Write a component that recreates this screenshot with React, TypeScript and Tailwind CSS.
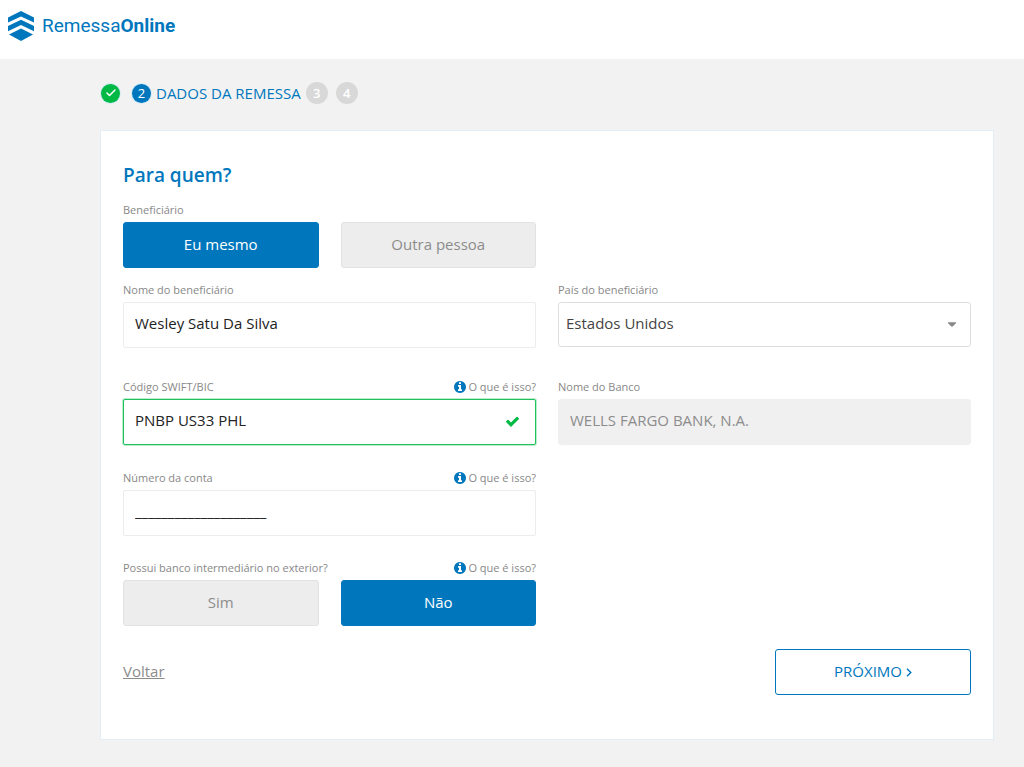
import { useState, type ReactNode } from "react";
import { FaCaretDown } from "react-icons/fa";
import { Check } from "lucide-react";
import { clsx } from "clsx";

const fieldClass =
  "block h-[46px] w-full rounded-xs border border-[#ececec] bg-white px-[11px] pb-[3px] text-[15px] text-[#222] outline-none";

function Logo() {
  return (
    <a href="#" className="flex items-center gap-2 text-[#0077bd]" aria-label="RemessaOnline">
      <svg className="h-[30px] w-[26px]" viewBox="0 0 26 30" fill="currentColor" aria-hidden="true">
        <path d="M13 0 26 6.6V11.6L13 5.4 0 11.6V6.6Z" />
        <path d="M13 8.8 26 15V20.2L13 14 0 20.2V15Z" />
        <path d="M13 17.6 25 23.6 13 30 1 23.6Z" />
      </svg>
      <span className="font-[Roboto,sans-serif] text-[19px] leading-6">
        Remessa<b className="font-bold">Online</b>
      </span>
    </a>
  );
}

function InfoIcon() {
  return (
    <svg className="size-3 text-[#0077bd]" viewBox="128 128 1536 1536" fill="currentColor" aria-hidden="true">
      <path d="M1152 1376v-160q0-14-9-23t-23-9h-96v-512q0-14-9-23t-23-9h-320q-14 0-23 9t-9 23v160q0 14 9 23t23 9h96v320h-96q-14 0-23 9t-9 23v160q0 14 9 23t23 9h448q14 0 23-9t9-23zm-128-896v-160q0-14-9-23t-23-9h-192q-14 0-23 9t-9 23v160q0 14 9 23t23 9h192q14 0 23-9t9-23zm640 416q0 209-103 385.5t-279.5 279.5-385.5 103-385.5-103-279.5-279.5-103-385.5 103-385.5 279.5-279.5 385.5-103 385.5 103 279.5 279.5 103 385.5z" />
    </svg>
  );
}

function ValidIcon() {
  return (
    <svg
      className="pointer-events-none absolute top-[15px] right-4 size-[15px] text-[#00b945]"
      viewBox="0 0 1792 1792"
      fill="currentColor"
      aria-hidden="true"
    >
      <path d="M1671 566q0 40-28 68l-724 724-136 136q-28 28-68 28t-68-28l-136-136-362-362q-28-28-28-68t28-68l136-136q28-28 68-28t68 28l294 295 656-657q28-28 68-28t68 28l136 136q28 28 28 68z" />
    </svg>
  );
}

function Stepper() {
  return (
    <ol className="flex items-center text-[15px] text-white">
      <li className="mr-3 flex size-[19px] items-center justify-center rounded-full bg-[#00b945] ring-1 ring-[#d5ebf5]">
        <Check className="size-3" strokeWidth={3} aria-label="Concluído" />
      </li>
      <li className="mr-[5px] flex items-center gap-[5px]" aria-current="step">
        <span className="flex size-[19px] items-center justify-center rounded-full bg-[#0077bd] text-[13px] ring-1 ring-[#d5ebf5]">
          2
        </span>
        <span className="text-[#0077bd]">DADOS DA REMESSA</span>
      </li>
      {[3, 4].map((step) => (
        <li
          key={step}
          className="mr-2 flex size-[22px] items-center justify-center rounded-full bg-[#d8d8d8] text-[13px] font-semibold"
        >
          {step}
        </li>
      ))}
    </ol>
  );
}

function HelpLink() {
  return (
    <a href="#" className="flex items-center gap-0.5">
      <InfoIcon />
      O que é isso?
    </a>
  );
}

type FieldProps = {
  label: string;
  htmlFor: string;
  help?: boolean;
  children: ReactNode;
};

function Field({ label, htmlFor, help, children }: FieldProps) {
  return (
    <div>
      <div className="mb-1 flex justify-between text-[11px] leading-4 text-[#888]">
        <label htmlFor={htmlFor}>{label}</label>
        {help && <HelpLink />}
      </div>
      {children}
    </div>
  );
}

type ChoiceProps = {
  id: string;
  label: string;
  options: [string, string];
  initial: string;
  help?: boolean;
};

function Choice({ id, label, options, initial, help }: ChoiceProps) {
  const [value, setValue] = useState(initial);

  return (
    <div role="group" aria-labelledby={id}>
      <div className="mb-1 flex justify-between text-[11px] leading-4 text-[#888]">
        <span id={id}>{label}</span>
        {help && <HelpLink />}
      </div>
      <div className="grid grid-cols-2 gap-[22px]">
        {options.map((option) => (
          <button
            key={option}
            type="button"
            aria-pressed={option === value}
            onClick={() => setValue(option)}
            className={clsx(
              "h-[46px] rounded-[3px] border text-[15px]",
              option === value
                ? "border-[#0077bd] bg-[#0077bd] text-white"
                : "border-[#e2e2e2] bg-[#ededed] text-[#8c8c8c]",
            )}
          >
            {option}
          </button>
        ))}
      </div>
    </div>
  );
}

export default function App() {
  return (
    <div className="min-h-screen bg-[#f2f2f2] font-['Open_Sans',sans-serif]">
      <header className="flex h-[59px] bg-white px-2 pt-[11px]">
        <div>
          <Logo />
        </div>
      </header>

      <main className="mr-[30px] ml-[100px] pt-[23px] pb-[27px]">
        <div className="pl-px">
          <Stepper />
        </div>

        <form
          onSubmit={(e) => e.preventDefault()}
          className="mt-[25px] border border-[#e1eef5] bg-white px-[22px] pt-[30px] pb-11"
        >
          <h1 className="mb-[13px] text-[19px] leading-7 font-semibold text-[#0077bd]">Para quem?</h1>

          <div className="grid grid-cols-2 gap-x-[22px]">
            <Choice
              id="beneficiario"
              label="Beneficiário"
              options={["Eu mesmo", "Outra pessoa"]}
              initial="Eu mesmo"
            />
          </div>

          <div className="mt-[14px] grid grid-cols-2 gap-x-[22px]">
            <Field label="Nome do beneficiário" htmlFor="nome">
              <input id="nome" className={fieldClass} defaultValue="Wesley Satu Da Silva" />
            </Field>
            <Field label="País do beneficiário" htmlFor="pais">
              <div className="relative">
                <select
                  id="pais"
                  className="block h-[45px] w-full appearance-none rounded-[3px] border border-[#dedede] bg-white px-[7px] pb-px text-[15px] text-[#444] outline-none"
                >
                  <option>Estados Unidos</option>
                </select>
                <FaCaretDown
                  className="pointer-events-none absolute top-[15px] right-3 size-[14px] text-[#888]"
                  aria-hidden="true"
                />
              </div>
            </Field>
          </div>

          <div className="mt-[31px] grid grid-cols-2 gap-x-[22px] gap-y-[25px]">
            <Field label="Código SWIFT/BIC" htmlFor="swift" help>
              <div className="relative">
                <input
                  id="swift"
                  className="block h-[46px] w-full rounded-xs border border-[#1fc15c] bg-white px-[11px] pb-[3px] text-[15px] text-[#222] ring-1 ring-[#1fc15c]/30 outline-none"
                  defaultValue="PNBP US33 PHL"
                />
                <ValidIcon />
              </div>
            </Field>
            <Field label="Nome do Banco" htmlFor="banco">
              <input
                id="banco"
                readOnly
                className="block h-[46px] w-full rounded-[3px] border border-[#f0f0f0] bg-[#f0f0f0] px-[11px] pb-[3px] text-[15px] text-[#8c8c8c] outline-none"
                defaultValue="WELLS FARGO BANK, N.A."
              />
            </Field>
            <Field label="Número da conta" htmlFor="conta" help>
              <input id="conta" className={fieldClass} defaultValue="____________________" />
            </Field>
          </div>

          <div className="mt-6 grid grid-cols-2 gap-x-[22px]">
            <Choice
              id="intermediario"
              label="Possui banco intermediário no exterior?"
              options={["Sim", "Não"]}
              initial="Não"
              help
            />
          </div>

          <div className="mt-[23px] flex items-center justify-between text-[15px]">
            <a href="#" className="text-[#8c8c8c] underline">
              Voltar
            </a>
            <button
              type="submit"
              className="flex h-[46px] w-[196px] items-center justify-center gap-1 rounded-[3px] border border-[#0077bd] bg-white text-[#0077bd]"
            >
              PRÓXIMO
              <svg
                className="mt-0.5 h-[9px] w-1.5"
                viewBox="0 0 6 9"
                fill="none"
                stroke="currentColor"
                strokeWidth="1.4"
                aria-hidden="true"
              >
                <path d="M1 .8 4.8 4.5 1 8.2" />
              </svg>
            </button>
          </div>
        </form>
      </main>
    </div>
  );
}
